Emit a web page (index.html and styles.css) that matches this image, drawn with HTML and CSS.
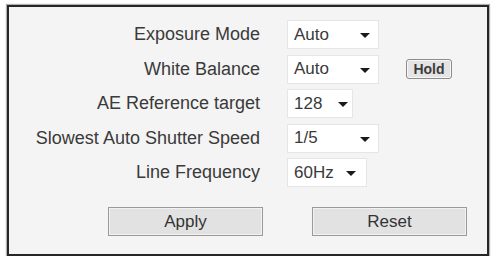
FILE: index.html
```html
<!DOCTYPE html>
<html>
	<head>
		<meta charset="UTF-8">
		<title>Camera Settings</title>
		<link rel="stylesheet" href="styles.css">
	</head>
	<body>
		<div class="panel">
			<div class="form">
				<label>Exposure Mode</label>
				<div class="sel w92"><span>Auto</span><i></i></div>
				<div></div>

				<label>White Balance</label>
				<div class="sel w92"><span>Auto</span><i></i></div>
				<div><button class="hold">Hold</button></div>

				<label>AE Reference target</label>
				<div class="sel w66"><span>128</span><i></i></div>
				<div></div>

				<label>Slowest Auto Shutter Speed</label>
				<div class="sel w92"><span>1/5</span><i></i></div>
				<div></div>

				<label>Line Frequency</label>
				<div class="sel w80"><span>60Hz</span><i></i></div>
				<div></div>
			</div>
			<div class="actions">
				<button class="btn">Apply</button>
				<button class="btn">Reset</button>
			</div>
		</div>
	</body>
</html>
```

FILE: styles.css
```css
body {
	margin: 0;
	background: #ffffff;
	font-family: "Liberation Sans", Arial, sans-serif;
	color: #3a3a3a;
}

.panel {
	width: 478px;
	height: 247px;
	margin: 5px 0 0 7px;
	border: 2px solid #262626;
	box-shadow: 0 0 1px 1px #b0b0b0;
	background: #f4f4f4;
	box-sizing: content-box;
}

.form {
	display: grid;
	grid-template-columns: 251px 92px auto;
	grid-auto-rows: 29px;
	column-gap: 27px;
	row-gap: 5.5px;
	padding-top: 13px;
	align-items: center;
	justify-content: start;
	justify-items: start;
}

.form label {
	justify-self: end;
	text-align: right;
	font-size: 18px;
	line-height: 29px;
}

.sel {
	height: 29px;
	box-sizing: border-box;
	background: #ffffff;
	border: 1px solid #e6e6e6;
	display: flex;
	align-items: center;
	justify-content: space-between;
	padding: 0 8px 0 6px;
	font-size: 17px;
}

.sel i {
	width: 0;
	height: 0;
	border-left: 5px solid transparent;
	border-right: 5px solid transparent;
	border-top: 5px solid #1a1a1a;
	margin-top: 2px;
}

.w92 { width: 92px; padding-right: 8px; }
.w66 { width: 66px; padding-right: 4px; }
.w80 { width: 80px; padding-right: 10px; }

.hold {
	display: block;
	width: 46px;
	height: 20px;
	padding: 0;
	margin-top: -1px;
	border: 1px solid #8c8c8c;
	border-radius: 3px;
	background: #e4e4e4;
	box-shadow: inset 0 0 0 1px #f6f6f6;
	font: bold 14px "Liberation Sans", Arial, sans-serif;
	color: #3c3c3c;
}

.actions {
	display: flex;
	gap: 49px;
	padding: 20px 0 0 99px;
}

.btn {
	width: 155px;
	height: 29px;
	border: 1px solid #9a9a9a;
	background: #e2e2e2;
	box-shadow: inset 0 0 0 1px #f2f2f2;
	font: 17px "Liberation Sans", Arial, sans-serif;
	color: #333333;
	padding: 0;
}
```
